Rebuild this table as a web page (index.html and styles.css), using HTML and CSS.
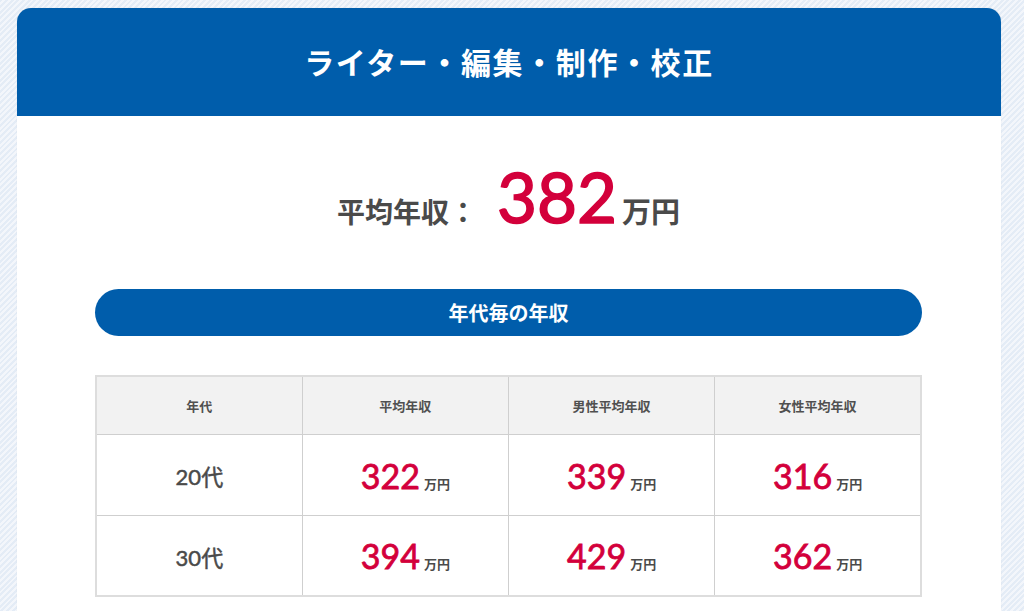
FILE: index.html
```html
<!DOCTYPE html>
<html lang="ja">
<head>
<meta charset="utf-8">
<title>ライター・編集・制作・校正</title>
<link rel="stylesheet" href="styles.css">
</head>
<body>
<div class="page">
  <section class="card">
    <h1 class="card-title">ライター・編集・制作・校正</h1>
    <div class="card-body">
      <p class="average">
        <span class="average-label">平均年収：</span><span class="average-num">382</span><span class="average-unit">万円</span>
      </p>
      <h2 class="pill">年代毎の年収</h2>
      <table class="salary">
        <thead>
          <tr><th>年代</th><th>平均年収</th><th>男性平均年収</th><th>女性平均年収</th></tr>
        </thead>
        <tbody>
          <tr>
            <td class="age">20代</td>
            <td><span class="num">322</span><span class="unit">万円</span></td>
            <td><span class="num">339</span><span class="unit">万円</span></td>
            <td><span class="num">316</span><span class="unit">万円</span></td>
          </tr>
          <tr>
            <td class="age">30代</td>
            <td><span class="num">394</span><span class="unit">万円</span></td>
            <td><span class="num">429</span><span class="unit">万円</span></td>
            <td><span class="num">362</span><span class="unit">万円</span></td>
          </tr>
        </tbody>
      </table>
    </div>
  </section>
</div>
</body>
</html>
```

FILE: styles.css
```css
* { box-sizing: border-box; }
html, body { margin: 0; padding: 0; }
body {
  font-family: "Noto Sans CJK JP", "Noto Sans", sans-serif;
  color: #444;
  background-color: #e7eef7;
  background-image: repeating-linear-gradient(135deg, #e4ecf6 0, #e4ecf6 2px, #f3f6fb 2px, #f3f6fb 4px);
  overflow: hidden;
}
.page {
  padding: 8px 23px 0 17px;
}
.card {
  background: #fff;
  border-radius: 14px 14px 0 0;
  box-shadow: 0 0 1px rgba(0,0,0,0.15);
  overflow: hidden;
}
.card-title {
  margin: 0;
  height: 108px;
  display: flex;
  align-items: center;
  justify-content: center;
  background: #005dab;
  color: #fff;
  font-size: 30px;
  font-weight: 700;
  letter-spacing: 1.6px;
  padding-bottom: 2px;
}
.card-body {
  padding: 36px 79px 60px 78px;
}
.average {
  margin: 0;
  display: flex;
  align-items: baseline;
  justify-content: center;
  height: 100px;
  line-height: 1;
  padding-top: 10px;
}
.average-label {
  font-size: 28px;
  font-weight: 700;
  color: #4a4a4a;
}
.average-num {
  font-family: "Lato", "Noto Sans", sans-serif;
  font-size: 69px;
  font-weight: 400;
  -webkit-text-stroke: 1.6px #d3003b;
  color: #d3003b;
  margin: 0 5px 0 20px;
}
.average-unit {
  font-size: 29px;
  font-weight: 700;
  color: #4a4a4a;
}
.pill {
  margin: 37px 0 0;
  height: 47px;
  border-radius: 24px;
  background: #005dab;
  color: #fff;
  font-size: 20px;
  font-weight: 700;
  display: flex;
  align-items: center;
  justify-content: center;
}
.salary {
  margin-top: 39px;
  width: 100%;
  border-collapse: collapse;
  table-layout: fixed;
  border: 2px solid #ddd;
}
.salary th, .salary td {
  border: 1px solid #cfcfcf;
  text-align: center;
  vertical-align: middle;
}
.salary th {
  height: 58px;
  background: #f2f2f2;
  font-size: 13px;
  font-weight: 700;
  color: #505050;
}
.salary td {
  height: 81px;
  padding-top: 2px;
}
.salary td.age {
  font-family: "Lato", "Noto Sans CJK JP", sans-serif;
  font-size: 22px;
  font-weight: 400;
  -webkit-text-stroke: 0.5px #4a4a4a;
  color: #4a4a4a;
}
.num {
  font-family: "Lato", "Noto Sans", sans-serif;
  font-size: 34px;
  font-weight: 400;
  -webkit-text-stroke: 0.8px #d3003b;
  color: #d3003b;
}
.unit {
  font-size: 13px;
  font-weight: 700;
  color: #4a4a4a;
  margin-left: 4px;
}
```
